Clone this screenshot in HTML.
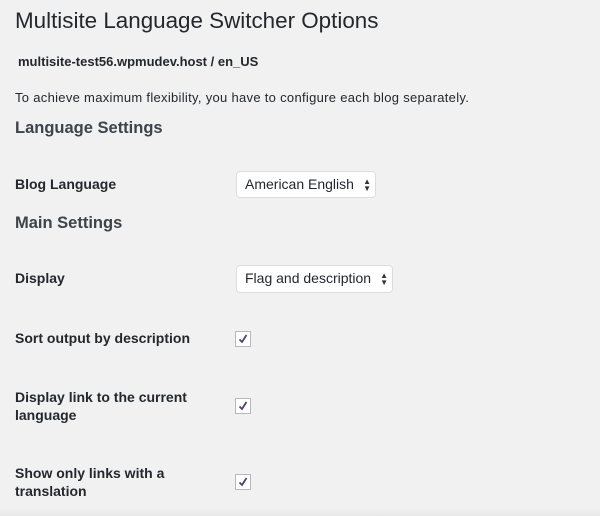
<!DOCTYPE html>
<html><head><style>
body{margin:0;width:600px;height:516px;background:#f1f1f1;font-family:"Liberation Sans",sans-serif;color:#23282d;position:relative;overflow:hidden}
.a{position:absolute;white-space:nowrap}
h1{position:absolute;left:15px;top:6px;margin:0;font-size:22.4px;font-weight:400;line-height:30px}
.b{font-weight:600;font-size:14px}
.h2{font-size:16.5px;font-weight:600;color:#3c434a}
.sel{position:absolute;background:#fff;border:1px solid #ddd;border-radius:4px;font-size:14px;box-sizing:border-box;padding-left:8px;line-height:25px}
.sel span.ar{position:absolute;right:4px;top:0;font-size:8px;line-height:7px;padding-top:6px;color:#333}
.cb{position:absolute;left:235px;width:16px;height:16px;box-sizing:border-box;border:1px solid #b4b9be;background:#fff}
.cb svg{position:absolute;left:1px;top:1px}
.bot{position:absolute;left:0;top:508px;width:600px;height:8px;background:linear-gradient(#f1f1f1,#e8e8e8)}
</style></head><body>
<h1>Multisite Language Switcher Options</h1>
<div class="a b" style="left:18px;top:54px;font-size:13px">multisite-test56.wpmudev.host / en_US</div>
<div class="a" style="left:15px;top:90px;font-size:13px;letter-spacing:0.3px">To achieve maximum flexibility, you have to configure each blog separately.</div>
<div class="a h2" style="left:15px;top:119px">Language Settings</div>
<div class="a b" style="left:15px;top:176px">Blog Language</div>
<div class="sel" style="left:236px;top:171px;width:140px;height:27px">American English<span class="ar">▲<br>▼</span></div>
<div class="a h2" style="left:15px;top:214px">Main Settings</div>
<div class="a b" style="left:15px;top:270px">Display</div>
<div class="sel" style="left:236px;top:265px;width:157px;height:28px">Flag and description<span class="ar">▲<br>▼</span></div>
<div class="a b" style="left:15px;top:330px">Sort output by description</div>
<div class="cb" style="top:331px"><svg width="12" height="12" viewBox="0 0 12 12"><path d="M2.5 6.5l2.5 2.5 4.5-7" stroke="#523f6d" stroke-width="1.8" fill="none"/></svg></div>
<div class="a b" style="left:15px;top:388px;line-height:18px">Display link to the current<br>language</div>
<div class="cb" style="top:398px"><svg width="12" height="12" viewBox="0 0 12 12"><path d="M2.5 6.5l2.5 2.5 4.5-7" stroke="#523f6d" stroke-width="1.8" fill="none"/></svg></div>
<div class="a b" style="left:15px;top:464px;line-height:18px">Show only links with a<br>translation</div>
<div class="cb" style="top:474px"><svg width="12" height="12" viewBox="0 0 12 12"><path d="M2.5 6.5l2.5 2.5 4.5-7" stroke="#523f6d" stroke-width="1.8" fill="none"/></svg></div>
<div class="bot"></div>
</body></html>
